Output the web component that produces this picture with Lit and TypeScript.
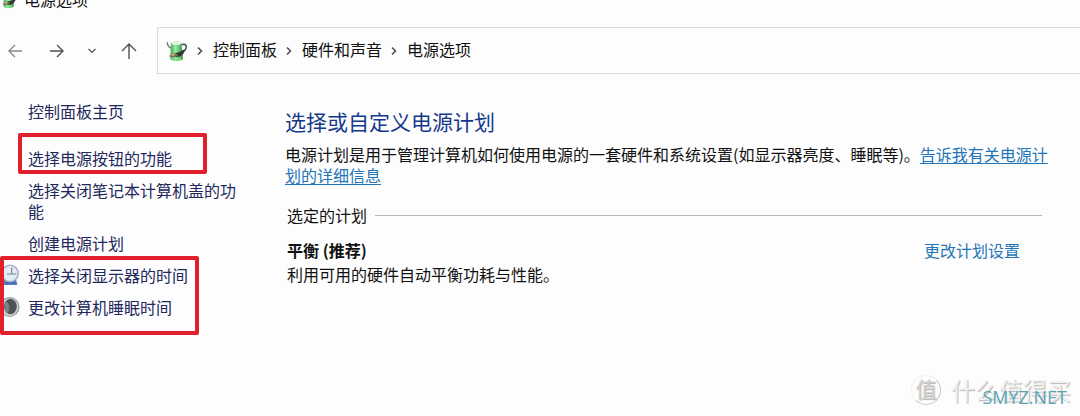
import { LitElement, html, css, svg } from "lit";
import { customElement } from "lit/decorators.js";

const powerIcon = html`
  <svg class="power" viewBox="0 0 22 22" aria-hidden="true">
    <defs>
      <linearGradient id="body" x1="0" x2="1">
        <stop offset="0" stop-color="#3fae4e" />
        <stop offset="0.4" stop-color="#98eaa0" />
        <stop offset="1" stop-color="#2f9a42" />
      </linearGradient>
    </defs>
    <path d="M1.2 2.2 C1.4 5 2.6 7 5 8" fill="none" stroke="#6d7770" stroke-width="1.4" />
    <path d="M15.4 5 C18 3.4 20.8 4.4 20.2 7.6 C19.8 9.6 18.4 11 17 12.6" fill="none" stroke="#414b4a" stroke-width="1.5" />
    <path d="M4.8 4.4 C5 .2 15.6 .2 15.6 4.4 L17 19 C14 21.8 6.6 21.8 4.4 19 Z" fill="url(#body)" />
    <ellipse cx="10.2" cy="3.2" rx="4.8" ry="1.9" fill="#e3efe3" />
    <path d="M7.4 15.4 C8.6 13 10.4 12.4 12.4 12.6 L18.6 9.2 L17.4 13.8 C15.6 16.4 12 17.4 8 16.8 Z" fill="#2f3a35" />
    <path d="M3 16.2 C5 13.6 7.4 12.8 9.8 13 L12 15.4 C9.4 17.8 6 17.6 3 16.2 Z" fill="#77735a" />
    <path d="M4.2 15.6 C6 14 7.8 13.6 9.4 13.8 L8 15.6 Z" fill="#cfbd93" />
    <path d="M6 19 Q10.5 20.8 15 18.6" fill="none" stroke="#8be089" stroke-width="1.2" />
  </svg>
`;

const stroke = (d: string, cls: string, box = "0 0 16 16") => html`
  <svg class=${cls} viewBox=${box} aria-hidden="true">${svg`<path d=${d} />`}</svg>
`;

const clockIcon = html`
  <svg class="task-icon" viewBox="0 0 20 22" aria-hidden="true">
    <path d="M3 15 L16 15 L17.4 21 L1 21 Z" fill="#5b7fc4" />
    <path d="M6 17.4 L15 17.4 L15.6 19.6 L5 19.6 Z" fill="#3c62b0" />
    <circle cx="10" cy="9.4" r="9" fill="#a9b4c4" />
    <circle cx="10" cy="9.4" r="7.4" fill="#e3ebf4" />
    <path d="M11.6 3.6 V10 H16.4 M11.6 10 H7" fill="none" stroke="#77879c" stroke-width="1.2" />
  </svg>
`;

const moonIcon = html`
  <svg class="task-icon" viewBox="0 0 20 22" aria-hidden="true">
    <circle cx="9.6" cy="11" r="10" fill="#9a9ea3" />
    <circle cx="9.6" cy="11" r="8.8" fill="#cdd0d3" />
    <ellipse cx="10.4" cy="10.6" rx="6.4" ry="7.6" fill="#4c5359" />
    <path d="M6 5.6 C3.6 9 4 14 7.4 17 C10.4 15 10.2 8 6 5.6 Z" fill="#7b8187" />
  </svg>
`;

@customElement("app-root")
export class AppRoot extends LitElement {
  static styles = css`
    :host {
      display: block;
      position: relative;
      min-height: 100vh;
      overflow: hidden;
      background: #fdfdfd;
      color: #111;
      font: 16px/21px "Noto Sans CJK SC", sans-serif;
    }
    a { color: inherit; text-decoration: none; }
    h1, h2, h3, p, ul, ol { margin: 0; padding: 0; font: inherit; }
    ul, ol { list-style: none; }
    svg { display: block; flex: none; }
    .power { width: 22px; height: 22px; }

    .titlebar {
      display: flex;
      align-items: flex-end;
      gap: 6px;
      height: 10px;
      overflow: hidden;
    }
    .titlebar .power { width: 18px; height: 20px; }

    .toolbar { display: flex; align-items: center; margin-top: 17px; }
    .nav { display: flex; align-items: center; flex: none; width: 157px; }
    .nav button {
      display: flex;
      justify-content: center;
      padding: 0;
      border: 0;
      background: none;
    }
    .nav button:nth-child(1) { width: 30px; }
    .nav button:nth-child(2) { width: 54px; }
    .nav button:nth-child(3) { width: 18px; }
    .nav button:nth-child(4) { width: 56px; }
    .arrow, .caret, .chevron { fill: none; stroke: #505050; stroke-width: 1.4; }
    .arrow { width: 16px; height: 16px; }
    .muted { stroke: #8a8a8a; }
    .caret { width: 10px; height: 10px; stroke-width: 1.2; }
    .chevron { width: 6px; height: 10px; stroke-width: 1.6; }

    .address {
      display: flex;
      align-items: center;
      flex: 1;
      box-sizing: border-box;
      height: 47px;
      padding-left: 8px;
      border: 1px solid #dadada;
      border-right: 0;
    }
    .crumbs { display: flex; }
    .crumbs li { display: flex; align-items: center; }
    .crumbs a { margin-bottom: 2px; }
    .crumbs .chevron { margin: 0 10px 0 9px; }

    .columns { display: flex; padding: 27px 20px 0 28px; }
    .tasks { flex: none; width: 210px; margin-right: 47px; color: #23285c; }
    .tasks ul { display: grid; gap: 11px; margin-top: 26px; }
    .tasks li { position: relative; }
    .task-icon { position: absolute; right: 100%; top: -1px; width: 20px; height: 22px; margin-right: 8px; }

    .main { flex: 1; min-width: 0; }
    h1 { color: #14388c; font-size: 21px; line-height: 27px; margin: 7px 0 9px; }
    .link { color: #2475b8; }
    .more { text-decoration: underline; text-underline-offset: 2px; text-decoration-thickness: 1px; }
    .plans { margin: 19px 18px 0 2px; }
    .legend { display: flex; align-items: center; gap: 8px; }
    .legend::after { content: ""; flex: 1; height: 1px; background: #b8b8b8; }
    .plan { display: flex; justify-content: space-between; margin-top: 14px; padding-right: 22px; }
    h3 { font-weight: 700; margin-bottom: 3px; }

    .mark { position: absolute; box-sizing: border-box; border: 4px solid #e2202c; border-radius: 2px; pointer-events: none; }
    .mark.buttons { left: 18px; top: 133px; width: 189px; height: 41px; }
    .mark.times { left: 0; top: 256px; width: 199px; height: 79px; }

    .watermark {
      position: absolute;
      right: 9px;
      bottom: 8px;
      display: flex;
      align-items: center;
      gap: 10px;
      color: #f1f1f1;
      font-size: 24px;
      line-height: 36px;
      text-shadow: 1px 1px 1px #b4b4b4;
    }
    .seal {
      box-sizing: border-box;
      width: 30px;
      height: 30px;
      border: 1px solid;
      border-color: #f1f1f1 #c4c4c4 #c4c4c4 #f1f1f1;
      border-radius: 50%;
      color: #d2d2d2;
      font-size: 21px;
      line-height: 25px;
      text-align: center;
    }
    .site {
      position: absolute;
      right: 13px;
      bottom: 8px;
      color: #5ba5b4;
      font: 500 18px/22px "Open Sans", sans-serif;
    }
  `;

  render() {
    return html`
      <header>
        <div class="titlebar">${powerIcon}<span>电源选项</span></div>
        <div class="toolbar">
          <nav class="nav" aria-label="导航">
            <button aria-label="后退">${stroke("M15 8 H2 M8 2 L2 8 L8 14", "arrow muted")}</button>
            <button aria-label="前进">${stroke("M1 8 H14 M8 2 L14 8 L8 14", "arrow")}</button>
            <button aria-label="最近的位置">${stroke("M1.5 3 L5 6.5 L8.5 3", "caret", "0 0 10 10")}</button>
            <button aria-label="上移">${stroke("M8 16 V1 M1 8 L8 1 L15 8", "arrow")}</button>
          </nav>
          <div class="address">
            ${powerIcon}
            <ol class="crumbs">
              ${["控制面板", "硬件和声音", "电源选项"].map(
                (name) => html`<li>${stroke("M1 1.5 L4.5 5 L1 8.5", "chevron", "0 0 6 10")}<a href="#">${name}</a></li>`
              )}
            </ol>
          </div>
        </div>
      </header>
      <div class="columns">
        <aside class="tasks">
          <a href="#">控制面板主页</a>
          <ul>
            <li><a href="#">选择电源按钮的功能</a></li>
            <li><a href="#">选择关闭笔记本计算机盖的功能</a></li>
            <li><a href="#">创建电源计划</a></li>
            <li>${clockIcon}<a href="#">选择关闭显示器的时间</a></li>
            <li>${moonIcon}<a href="#">更改计算机睡眠时间</a></li>
          </ul>
        </aside>
        <main class="main">
          <h1>选择或自定义电源计划</h1>
          <p>电源计划是用于管理计算机如何使用电源的一套硬件和系统设置(如显示器亮度、睡眠等)。<a class="link more" href="#">告诉我有关电源计划的详细信息</a></p>
          <section class="plans">
            <h2 class="legend">选定的计划</h2>
            <div class="plan">
              <div>
                <h3>平衡 (推荐)</h3>
                <p>利用可用的硬件自动平衡功耗与性能。</p>
              </div>
              <a class="link" href="#">更改计划设置</a>
            </div>
          </section>
        </main>
      </div>
      <div class="mark buttons"></div>
      <div class="mark times"></div>
      <div class="watermark"><span class="seal">值</span><span>什么值得买</span></div>
      <div class="site">SMYZ.NET</div>
    `;
  }
}
